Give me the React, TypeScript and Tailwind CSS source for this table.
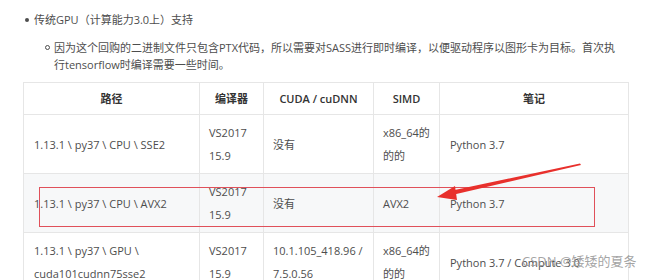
const font = { fontFamily: '"Open Sans", "Noto Sans CJK SC", sans-serif' };

const rows = [
  {
    path: ["1.13.1 \\ py37 \\ CPU \\ SSE2"],
    compiler: ["VS2017", "15.9"],
    cuda: ["没有"],
    simd: ["x86_64的", "的的"],
    note: "Python 3.7",
    shaded: false,
  },
  {
    path: ["1.13.1 \\ py37 \\ CPU \\ AVX2"],
    compiler: ["VS2017", "15.9"],
    cuda: ["没有"],
    simd: ["AVX2"],
    note: "Python 3.7",
    shaded: true,
  },
  {
    path: ["1.13.1 \\ py37 \\ GPU \\", "cuda101cudnn75sse2"],
    compiler: ["VS2017", "15.9"],
    cuda: ["10.1.105_418.96 /", "7.5.0.56"],
    simd: ["x86_64的", "的的"],
    note: "Python 3.7 / Compute 3.0",
    shaded: false,
  },
];

function Lines({ items }: { items: string[] }) {
  return (
    <>
      {items.map((t) => (
        <div key={t}>{t}</div>
      ))}
    </>
  );
}

export default function App() {
  return (
    <div className="relative h-[280px] w-[650px] overflow-hidden bg-white text-[11px] text-[#4d4d4d]" style={font}>
      {/* Bullets */}
      <div className="pt-[11px]">
        <div className="flex items-center gap-[5px] pl-[25px] leading-[18px]">
          <span className="h-[4px] w-[4px] rounded-full bg-[#4d4d4d]" />
          <span>传统GPU（计算能力3.0上）支持</span>
        </div>
        <div className="mt-[10px] flex gap-[4px] pl-[45px] leading-[17px]">
          <span className="mt-[6px] h-[5px] w-[5px] shrink-0 rounded-full border border-[#4d4d4d]" />
          <span className="whitespace-nowrap">
            因为这个回购的二进制文件只包含PTX代码，所以需要对SASS进行即时编译，以便驱动程序以图形卡为目标。首次执
            <br />
            行tensorflow时编译需要一些时间。
          </span>
        </div>
      </div>

      {/* Table */}
      <table className="ml-[23px] mt-[9px] w-[605px] table-fixed border-collapse">
        <colgroup>
          <col className="w-[176px]" />
          <col className="w-[64px]" />
          <col className="w-[110px]" />
          <col className="w-[66px]" />
          <col className="w-[189px]" />
        </colgroup>
        <thead>
          <tr className="bg-white text-[#333]">
            {["路径", "编译器", "CUDA / cuDNN", "SIMD", "笔记"].map((h) => (
              <th key={h} className="border border-[#e6e6e6] px-[9px] py-[5px] text-center font-semibold leading-[21px]">
                {h}
              </th>
            ))}
          </tr>
        </thead>
        <tbody>
          {rows.map((r, i) => (
            <tr key={i} className={r.shaded ? "bg-[#f7f8f9]" : "bg-white"}>
              <td className="border border-[#e6e6e6] px-[10px] py-[6px] leading-[23px]">
                <Lines items={r.path} />
              </td>
              <td className="border border-[#e6e6e6] px-[9px] py-[6px] leading-[23px]">
                <Lines items={r.compiler} />
              </td>
              <td className="border border-[#e6e6e6] px-[9px] py-[6px] leading-[23px]">
                <Lines items={r.cuda} />
              </td>
              <td className="border border-[#e6e6e6] px-[9px] py-[6px] leading-[23px]">
                <Lines items={r.simd} />
              </td>
              <td className="whitespace-nowrap border border-[#e6e6e6] px-[10px] py-[6px] leading-[23px]">
                {r.note}
              </td>
            </tr>
          ))}
        </tbody>
      </table>

      {/* Annotation box */}
      <div className="absolute left-[39px] top-[187px] h-[40px] w-[556px] border border-[#e0505a]" />

      {/* Arrow */}
      <svg className="absolute left-0 top-0" width="650" height="280" viewBox="0 0 650 280">
        <polygon points="580,163.5 581,165 452,195 450,191" fill="#e8302c" />
        <polygon points="437,197 455,186 457,200" fill="#e8302c" />
      </svg>

      {/* Watermark */}
      <div className="absolute left-[522px] top-[252px] whitespace-nowrap text-[13px] text-[#999999]/90">
        CSDN @矮矮的夏条
      </div>
    </div>
  );
}
